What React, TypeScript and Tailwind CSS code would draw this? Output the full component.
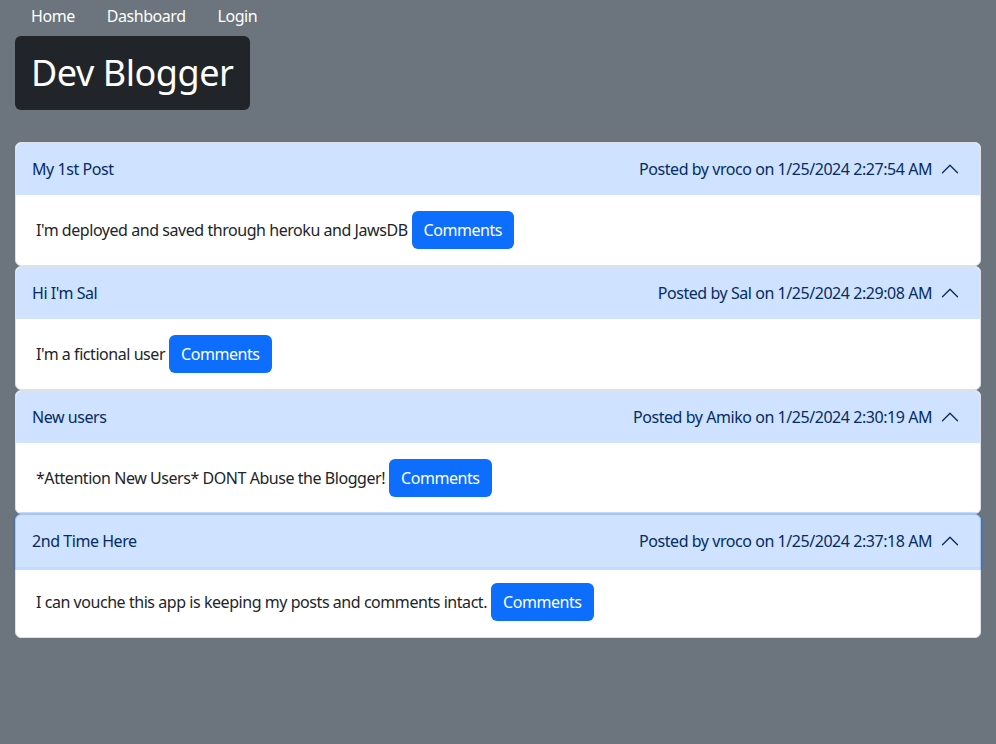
import React from 'react'

type Post = {
  title: string
  author: string
  date: string
  body: string
}

const posts: Post[] = [
  { title: 'My 1st Post', author: 'vroco', date: '1/25/2024 2:27:54 AM', body: "I'm deployed and saved through heroku and JawsDB" },
  { title: "Hi I'm Sal", author: 'Sal', date: '1/25/2024 2:29:08 AM', body: "I'm a fictional user" },
  { title: 'New users', author: 'Amiko', date: '1/25/2024 2:30:19 AM', body: '*Attention New Users* DONT Abuse the Blogger!' },
  { title: '2nd Time Here', author: 'vroco', date: '1/25/2024 2:37:18 AM', body: 'I can vouche this app is keeping my posts and comments intact.' },
]

// bootstrap's accordion chevron, flipped since every item is open
function ChevronUp() {
  return (
    <svg width="20" height="20" viewBox="0 0 16 16" fill="#052c65" className="rotate-180">
      <path
        fillRule="evenodd"
        d="M1.646 4.646a.5.5 0 0 1 .708 0L8 10.293l5.646-5.647a.5.5 0 0 1 .708.708l-6 6a.5.5 0 0 1-.708 0l-6-6a.5.5 0 0 1 0-.708z"
      />
    </svg>
  )
}

function PostItem({ post, focused }: { post: Post; focused?: boolean }) {
  return (
    <div className="bg-white border border-[#dee2e6] rounded-md">
      <div
        className={
          focused
            ? 'relative z-10 flex h-[52px] items-center pl-4 pr-5 bg-[#cfe2ff] text-[#052c65] rounded-t-md shadow-[0_0_0_3px_rgba(13,110,253,0.25)]'
            : 'flex h-[52px] items-center pl-4 pr-5 bg-[#cfe2ff] text-[#052c65] rounded-t-md'
        }
      >
        <span>{post.title}</span>
        <span className="ml-auto">Posted by {post.author} on {post.date}</span>
        <span className="ml-2 flex items-center">
          <ChevronUp />
        </span>
      </div>
      <div className="flex items-center px-5 py-4 text-[#212529]">
        <span>{post.body}</span>
        <button className="ml-1 h-[38px] px-3 rounded-md bg-[#0d6efd] text-white">Comments</button>
      </div>
    </div>
  )
}

export default function App() {
  return (
    <div className="min-h-[744px] bg-[#6c757d] px-[15px] font-['Segoe_UI','Noto_Sans',sans-serif] text-base leading-6 tracking-[-0.028em]">
      <nav className="flex py-1">
        <a className="px-4 text-white">Home</a>
        <a className="px-4 text-white">Dashboard</a>
        <a className="px-4 text-white">Login</a>
      </nav>
      <div className="mt-1 inline-flex h-[74px] items-center px-4 rounded-md bg-[#212529]">
        <h1 className="text-[36px] leading-[44px] text-white">Dev Blogger</h1>
      </div>
      <div className="mt-8 flex flex-col">
        {posts.map((p, i) => (
          <PostItem key={p.title} post={p} focused={i === posts.length - 1} />
        ))}
      </div>
    </div>
  )
}
